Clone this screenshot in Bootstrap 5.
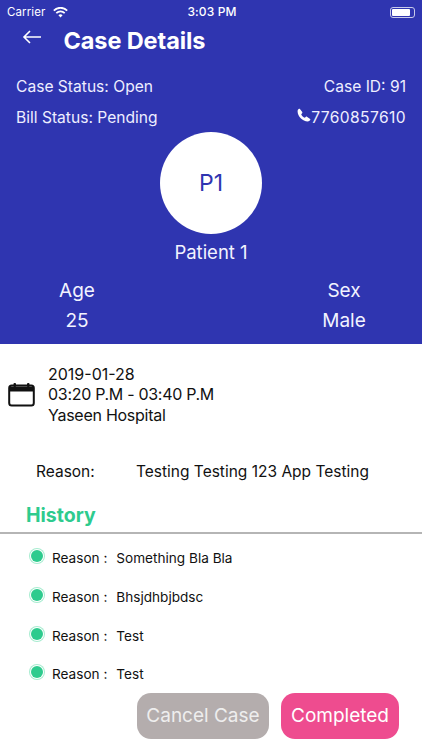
<!DOCTYPE html>
<html lang="en">
<head>
<meta charset="utf-8">
<title>Case Details</title>
<link href="https://cdn.jsdelivr.net/npm/bootstrap@5.3.0/dist/css/bootstrap.min.css" rel="stylesheet">
<style>
html,body{height:750px;overflow:hidden;background:#fff}
body{font-family:Inter,"Liberation Sans",sans-serif;color:#111}
.hero{background:#2f35b0;color:#fff;height:344px}
.sbar{height:22px;padding:2px 7px 0 7px;font-size:11.5px;line-height:18px;letter-spacing:.1px}
.sbar-side{width:130px}
.sbar-time{font-weight:500;font-size:12px;margin-left:2px}
.batt{width:25px;height:11px;border:1px solid #c8caea;border-radius:3px;padding:1px}
.batt i{display:block;width:18px;height:100%;background:#fff;border-radius:1px}
.titlebar{height:35px;padding-left:22px;margin-top:1px}
.titlebar svg{margin-top:-7px}
.htitle{font-size:23.5px;font-weight:700;margin:0 0 0 21.500px;line-height:35px;letter-spacing:-.1px}
.metarow{padding:0 16px;font-size:15.6px;height:31px;line-height:31px;color:#eef}
.metafirst{margin-top:13px}
.phone-no{letter-spacing:.4px}
.phone-ic{margin-top:-6px}
.avatar{width:102px;height:102px;background:#fff;color:#2f35b0;font-size:23px;margin:-1px auto 0}
.pname{font-size:18.5px;line-height:24px;margin-top:6px;color:#f2f3ff}
.stats{margin-top:12px;font-size:19px;line-height:29.5px;color:#f2f3ff}
.statcol{width:154px}
.statcol-r{margin-right:1px}
.apt{padding:19.500px 0 0 8px;font-size:16px;line-height:20.5px}
.apt svg{margin-right:13px}
.apt-time{letter-spacing:-.3px}
.apt-place{letter-spacing:-.27px}
.reason{padding:0 0 0 36px;margin-top:35px;font-size:15.5px;line-height:24px}
.reason span:first-child{width:100px}
.histh{color:#2ecb8e;font-size:19.5px;font-weight:700;padding-left:26px;margin-top:19px;line-height:24px}
.rule{height:1.5px;background:#b5b5b5;margin-top:5px}
.hist{padding:0 0 0 31px;margin:5.500px 0 0;list-style:none;font-size:13.6px}
.hist li{height:38.7px;line-height:36px}
.dot{width:12px;height:12px;border-radius:50%;background:#2ecb8e;box-shadow:0 0 0 1px #fff,0 0 0 2px #a8ecd0;margin:-4px 9px 0 0;flex:none}
.hist b{font-weight:400;margin-right:9px}
.acts{gap:12px;padding-right:23px;margin-top:-1px}
.btn.act{height:46px;border:0;border-radius:14px;color:#fff;font-size:19px;padding:0;line-height:46px}
.btn.cancel{width:132px;background:#b4adad;color:#eee}
.btn.done{width:118px;background:#ee4c8f}
</style>
</head>
<body>
<div class="hero">
  <div class="sbar d-flex justify-content-between align-items-center">
    <div class="sbar-side d-flex align-items-center gap-2">Carrier
      <svg width="15" height="11" viewBox="0 0 15 11"><path d="M7.5 10.6 5.4 8.3a3 3 0 0 1 4.2 0zM3.9 6.8 2.7 5.5a6.8 6.8 0 0 1 9.6 0l-1.2 1.3a5 5 0 0 0-7.2 0zM1.4 4.2 .2 2.9a10.3 10.3 0 0 1 14.6 0l-1.2 1.3a8.6 8.6 0 0 0-12.2 0z" fill="#fff"/></svg>
    </div>
    <div class="sbar-time">3:03 PM</div>
    <div class="sbar-side d-flex justify-content-end"><div class="batt"><i></i></div></div>
  </div>
  <div class="titlebar d-flex align-items-center">
    <svg width="20" height="14" viewBox="0 0 20 14"><path d="M19 7H2M8 1 2 7l6 6" fill="none" stroke="#fff" stroke-width="1.6"/></svg>
    <h1 class="htitle">Case Details</h1>
  </div>
  <div class="metarow metafirst d-flex justify-content-between"><span>Case Status: Open</span><span>Case ID: 91</span></div>
  <div class="metarow d-flex justify-content-between"><span>Bill Status: Pending</span>
    <span class="d-flex align-items-center phone-no"><svg class="phone-ic" width="14" height="14" viewBox="0 0 24 24"><path d="M5 1.5 9 7c.4.6.3 1.3-.2 1.800L7.200 10.500c1.200 2.800 3.500 5.100 6.300 6.300l1.700-1.600c.5-.5 1.200-.6 1.800-.2l5.500 4c.5.400.6 1.100.2 1.600-1 1.400-2.500 2.400-4.200 2.400C9.500 23 1 14.500 1 5.500c0-1.700 1-3.200 2.400-4.200.5-.3 1.200-.3 1.600.2z" fill="#fff"/></svg>7760857610</span></div>
  <div class="avatar rounded-circle d-flex align-items-center justify-content-center">P1</div>
  <div class="pname text-center">Patient 1</div>
  <div class="stats d-flex justify-content-between text-center">
    <div class="statcol"><div>Age</div><div>25</div></div>
    <div class="statcol statcol-r"><div>Sex</div><div>Male</div></div>
  </div>
</div>
<div class="apt d-flex align-items-center">
  <svg width="27" height="25" viewBox="0 0 27 25"><rect x="1.200" y="3.500" width="24.600" height="20" rx="2.500" fill="none" stroke="#111" stroke-width="2"/><path d="M1.500 4.500h24v5h-24z" fill="#111"/><rect x="5.500" y="1" width="2.500" height="4" rx="1" fill="#111"/><rect x="19" y="1" width="2.500" height="4" rx="1" fill="#111"/></svg>
  <div><div>2019-01-28</div><div class="apt-time">03:20 P.M - 03:40 P.M</div><div class="apt-place">Yaseen Hospital</div></div>
</div>
<div class="reason d-flex"><span class="d-block">Reason:</span><span>Testing Testing 123 App Testing</span></div>
<div class="histh">History</div>
<div class="rule"></div>
<ul class="hist">
  <li class="d-flex align-items-center"><span class="dot"></span><span><b>Reason :</b>Something Bla Bla</span></li>
  <li class="d-flex align-items-center"><span class="dot"></span><span><b>Reason :</b>Bhsjdhbjbdsc</span></li>
  <li class="d-flex align-items-center"><span class="dot"></span><span><b>Reason :</b>Test</span></li>
  <li class="d-flex align-items-center"><span class="dot"></span><span><b>Reason :</b>Test</span></li>
</ul>
<div class="acts d-flex justify-content-end">
  <button type="button" class="btn act cancel">Cancel Case</button>
  <button type="button" class="btn act done">Completed</button>
</div>
<script src="https://cdn.jsdelivr.net/npm/bootstrap@5.3.0/dist/js/bootstrap.bundle.min.js"></script>
</body>
</html>
